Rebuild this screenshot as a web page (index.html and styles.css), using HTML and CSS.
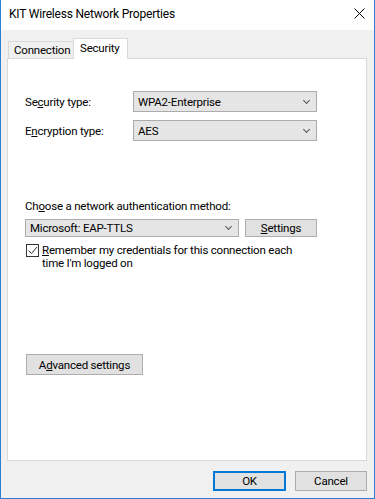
FILE: index.html
```html
<!DOCTYPE html>
<html lang="en">
<head>
  <meta charset="UTF-8">
  <title>KIT Wireless Network Properties</title>
  <link rel="stylesheet" href="styles.css">
</head>
<body>
  <div class="window">
    <div class="titlebar">
      <span class="title">KIT Wireless Network Properties</span>
      <svg class="close" width="11" height="11" viewBox="0 0 11 11">
        <path d="M0.5 0.5 L10.5 10.5 M10.5 0.5 L0.5 10.5" stroke="#000" stroke-width="1" fill="none"/>
      </svg>
    </div>

    <div class="client">
      <div class="tabs">
        <div class="tab">Connection</div>
        <div class="tab active">Security</div>
      </div>

      <div class="panel">
        <div class="field-row">
          <label class="field-label">Se<u>c</u>urity type:</label>
          <div class="combo wide"><span>WPA2-Enterprise</span><span class="chevron"></span></div>
        </div>
        <div class="field-row">
          <label class="field-label">E<u>n</u>cryption type:</label>
          <div class="combo wide"><span>AES</span><span class="chevron"></span></div>
        </div>

        <div class="auth">
          <div class="auth-label">Ch<u>o</u>ose a network authentication method:</div>
          <div class="auth-row">
            <div class="combo method"><span>Microsoft: EAP-TTLS</span><span class="chevron"></span></div>
            <button class="btn settings"><u>S</u>ettings</button>
          </div>
          <div class="remember">
            <span class="checkbox">
              <svg width="11" height="11" viewBox="0 0 11 11">
                <path d="M1.5 5.5 L4.5 8.5 L10 2" stroke="#333" stroke-width="1" fill="none"/>
              </svg>
            </span>
            <span class="remember-text"><u>R</u>emember my credentials for this connection each time I'm logged on</span>
          </div>
        </div>

        <button class="btn advanced">A<u>d</u>vanced settings</button>
      </div>

      <div class="footer">
        <button class="btn default">OK</button>
        <button class="btn">Cancel</button>
      </div>
    </div>
  </div>
</body>
</html>
```

FILE: styles.css
```css
html, body {
  margin: 0;
  padding: 0;
}
body {
  width: 375px;
  height: 499px;
  font-family: Roboto, "Noto Sans", sans-serif;
  font-size: 11.5px;
  letter-spacing: -0.2px;
  color: #000;
  background: #fff;
}
u { text-decoration: underline; text-underline-offset: 1px; }

.window {
  box-sizing: border-box;
  height: 499px;
  border: 1px solid #2b7fd4;
  border-top: none;
  display: flex;
  flex-direction: column;
  background: #f0f0f0;
}
.titlebar {
  height: 30px;
  background: #fff;
  display: flex;
  align-items: center;
  justify-content: space-between;
  padding: 0 8px 0 8px;
}
.title { margin-top: -2px; font-size: 12px; letter-spacing: -0.2px; }
.close { margin-right: 1px; margin-top: -3px; }

.client {
  flex: 1;
  padding: 8px 7px 0 6px;
  display: flex;
  flex-direction: column;
}
.tabs {
  display: flex;
  align-items: flex-end;
  padding-left: 1px;
  height: 20px;
}
.tab {
  box-sizing: border-box;
  width: 66px;
  height: 17px;
  padding: 0 0 0 5px;
  border: 1px solid #d9d9d9;
  border-bottom: none;
  line-height: 16px;
  background: #f0f0f0;
}
.tab.active {
  width: 55px;
  height: 21px;
  margin-bottom: -1px;
  margin-left: -1px;
  padding: 0 0 0 6px;
  background: #fff;
  line-height: 18px;
  position: relative;
  z-index: 1;
}

.panel {
  box-sizing: border-box;
  height: 403px;
  background: #fff;
  border: 1px solid #d9d9d9;
  padding: 32px 0 0 17px;
  display: flex;
  flex-direction: column;
  align-items: flex-start;
}
.field-row {
  display: flex;
  align-items: center;
  margin-bottom: 8px;
}
.field-label { width: 108px; }

.combo {
  box-sizing: border-box;
  height: 21px;
  background: #e5e5e5;
  border: 1px solid #acacac;
  display: flex;
  align-items: center;
  justify-content: space-between;
  padding: 0 7px 0 4px;
}
.combo.wide { width: 184px; }
.combo.method { width: 214px; height: 18px; }
.chevron {
  width: 4px;
  height: 4px;
  border-right: 1px solid #555;
  border-bottom: 1px solid #555;
  transform: rotate(45deg);
  margin-top: -3px;
}

.auth { margin-top: 49px; }
.auth-label { line-height: 16px; margin-bottom: 5px; }
.auth-row { display: flex; gap: 6px; }

.btn {
  box-sizing: border-box;
  font: inherit;
  letter-spacing: inherit;
  color: #000;
  background: #e1e1e1;
  border: 1px solid #adadad;
  padding: 0;
  height: 21px;
}
.btn.settings { width: 72px; height: 18px; }
.remember {
  display: flex;
  align-items: flex-start;
  margin-top: 7px;
  margin-left: 1px;
}
.checkbox {
  box-sizing: border-box;
  width: 13px;
  height: 13px;
  border: 1px solid #333;
  background: #fff;
  display: flex;
  align-items: center;
  justify-content: center;
  flex: none;
}
.remember-text {
  width: 258px;
  margin-left: 3px;
  line-height: 13px;
}
.btn.advanced {
  width: 117px;
  margin-top: 84px;
  margin-left: 1px;
}

.footer {
  display: flex;
  justify-content: flex-end;
  gap: 9px;
  padding-top: 10px;
}
.footer .btn { width: 72px; height: 20px; }
.footer .btn.default { width: 73px; border: 2px solid #0078d7; }
```
